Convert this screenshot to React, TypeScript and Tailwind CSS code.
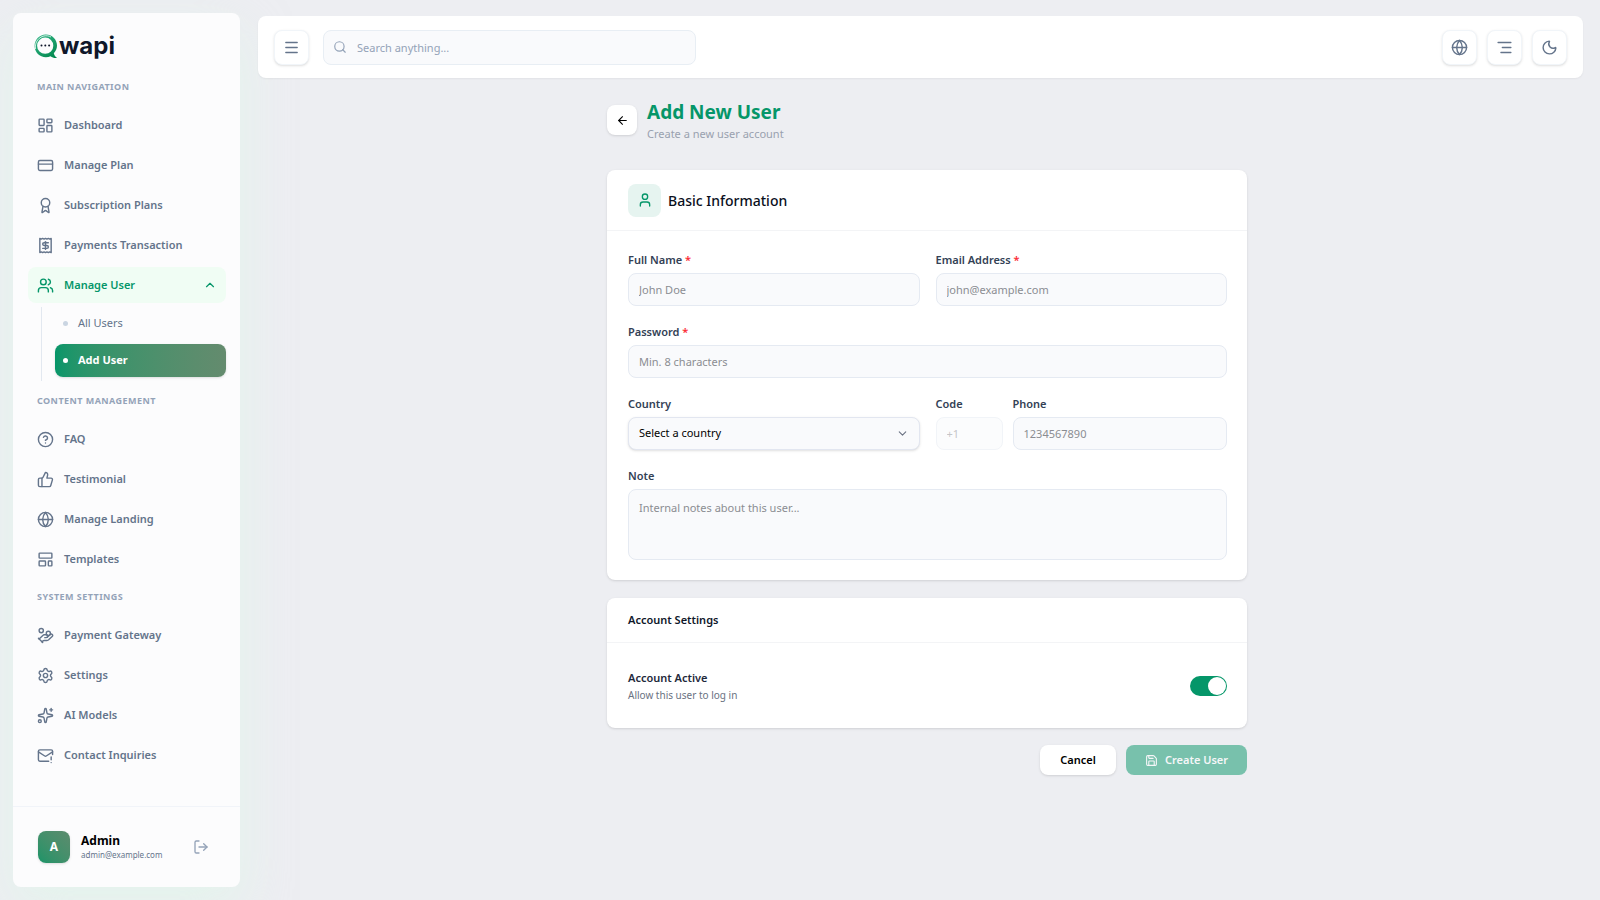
import { useState } from 'react';
import {
  AlignRight,
  ArrowLeft,
  Award,
  ChevronDown,
  ChevronUp,
  CircleHelp,
  CreditCard,
  Globe,
  HandCoins,
  LayoutDashboard,
  LayoutTemplate,
  LogOut,
  MailWarning,
  Menu,
  Moon,
  Receipt,
  Save,
  Search,
  Settings,
  Sparkles,
  ThumbsUp,
  User,
  Users,
  type LucideIcon,
} from 'lucide-react';

type NavItem = {
  label: string;
  icon: LucideIcon;
  children?: { label: string; active?: boolean }[];
};

const sections: { title: string; items: NavItem[] }[] = [
  {
    title: 'Main Navigation',
    items: [
      { label: 'Dashboard', icon: LayoutDashboard },
      { label: 'Manage Plan', icon: CreditCard },
      { label: 'Subscription Plans', icon: Award },
      { label: 'Payments Transaction', icon: Receipt },
      {
        label: 'Manage User',
        icon: Users,
        children: [{ label: 'All Users' }, { label: 'Add User', active: true }],
      },
    ],
  },
  {
    title: 'Content Management',
    items: [
      { label: 'FAQ', icon: CircleHelp },
      { label: 'Testimonial', icon: ThumbsUp },
      { label: 'Manage Landing', icon: Globe },
      { label: 'Templates', icon: LayoutTemplate },
    ],
  },
  {
    title: 'System Settings',
    items: [
      { label: 'Payment Gateway', icon: HandCoins },
      { label: 'Settings', icon: Settings },
      { label: 'AI Models', icon: Sparkles },
      { label: 'Contact Inquiries', icon: MailWarning },
    ],
  },
];

const inputClass =
  'block w-full h-[33px] rounded-lg border border-[#e5eaf2] bg-[#f9fafc] px-2.5 text-[11px] text-gray-900 placeholder:text-[#8b8d92] outline-none focus:border-[#059669]';

const Logo = () => (
  <a href="#" className="flex items-center gap-px pl-[21px]" aria-label="wapi">
    <svg width="24" height="25" viewBox="0 0 24 25" fill="none">
      <defs>
        <linearGradient id="bubble" x1="4" y1="2" x2="20" y2="24" gradientUnits="userSpaceOnUse">
          <stop stopColor="#2fb383" />
          <stop offset="1" stopColor="#03884f" />
        </linearGradient>
      </defs>
      <path
        fill="url(#bubble)"
        fillRule="evenodd"
        d="M11.8.6C18 .6 23 5.500 23 11.600c0 3.200-1.200 5.700-3.200 7.700.5 2.100 1.600 3.600 3.300 4.700-2.800.3-4.900-.4-6.500-1.700-1.500.6-3 .9-4.700.9C5.600 23.200.6 18.200.6 12 .6 5.700 5.600.6 11.800.6ZM11.200 3.600a8.100 8.100 0 1 0 0 16.200 8.100 8.100 0 0 0 0-16.200Z"
      />
      <path d="M1.600 15C.6 9.500 3.400 4.200 9 2.200c3-.9 6-.4 8 .8" stroke="#fcfdfd" strokeWidth=".8" />
      <circle cx="7.500" cy="11.500" r="1" fill="#0f172a" />
      <circle cx="11.300" cy="11.500" r="1" fill="#0f172a" />
      <circle cx="15.100" cy="11.500" r="1" fill="#0f172a" />
    </svg>
    <span className="font-['Inter',sans-serif] text-[24px] leading-[26px] font-bold text-[#0f172a]">wapi</span>
  </a>
);

const NavLink = ({ item }: { item: NavItem }) => {
  const Icon = item.icon;

  if (!item.children) {
    return (
      <a href="#" className="flex h-9 items-center gap-2.5 rounded-lg px-[9px] text-[11px] font-semibold text-[#64748b]">
        <Icon size={17} />
        {item.label}
      </a>
    );
  }

  return (
    <div>
      <button
        type="button"
        aria-expanded="true"
        className="flex h-9 w-full items-center gap-2.5 rounded-lg bg-[#f0fdf4] px-[9px] text-[11px] font-semibold text-[#059669]"
      >
        <Icon size={17} />
        {item.label}
        <ChevronUp size={14} className="ml-auto" />
      </button>
      <div className="mt-1 ml-[13px] flex flex-col gap-1 border-l border-[#e2e8f0] pb-1 pl-[13px]">
        {item.children.map((child) => (
          <a
            key={child.label}
            href="#"
            className={
              child.active
                ? 'flex h-[33px] items-center gap-2.5 rounded-lg bg-linear-to-r from-[#059669] to-[#648b6e] px-2 text-[11px] font-bold text-white shadow-sm'
                : 'flex h-[33px] items-center gap-2.5 rounded-lg px-2 text-[11px] text-[#64748b]'
            }
          >
            <span className={child.active ? 'size-[5px] rounded-full bg-white' : 'size-[5px] rounded-full bg-slate-300'} />
            {child.label}
          </a>
        ))}
      </div>
    </div>
  );
};

const Sidebar = () => (
  <aside className="flex w-[227px] shrink-0 flex-col rounded-lg bg-[#fcfcfd] pt-5 shadow-[0_20px_50px_rgba(220,252,231,0.5)]">
    <Logo />
    <nav className="flex flex-col gap-3 pt-5 pr-[14px] pl-[15px]">
      {sections.map((section) => (
        <div key={section.title}>
          <h2 className="mb-3 px-[9px] text-[9px] leading-4 font-bold tracking-wider text-[#94a3b8] uppercase">
            {section.title}
          </h2>
          <div className="flex flex-col gap-1">
            {section.items.map((item) => (
              <NavLink key={item.label} item={item} />
            ))}
          </div>
        </div>
      ))}
    </nav>
    <div className="mt-auto flex items-center border-t border-[#f1f4f9] px-[25px] py-6">
      <div className="flex size-8 items-center justify-center rounded-lg bg-linear-to-tr from-[#159468] to-[#5c8b6e] text-[12px] font-bold text-white shadow-sm">
        A
      </div>
      <div className="ml-[11px]">
        <p className="text-[12px] leading-4 font-bold text-black">Admin</p>
        <p className="text-[8px] leading-3 text-[#64748b]">admin@example.com</p>
      </div>
      <button type="button" aria-label="Log out" className="mr-1.5 ml-auto text-[#94a3b8]">
        <LogOut size={16} />
      </button>
    </div>
  </aside>
);

const headerButton =
  'flex size-[35px] shrink-0 items-center justify-center rounded-lg border border-[#f1f5f9] bg-white text-[#64748b] shadow-sm';

const Header = () => (
  <header className="mr-[17px] ml-1 flex h-[62px] items-center rounded-lg bg-white px-4 shadow-xs">
    <button type="button" aria-label="Toggle sidebar" className={headerButton}>
      <Menu size={17} />
    </button>
    <div className="relative ml-[14px] w-[373px]">
      <Search size={14} className="absolute top-[10px] left-2.5 text-[#94a3b8]" />
      <input
        type="search"
        aria-label="Search"
        placeholder="Search anything..."
        className="block h-[35px] w-full rounded-lg border border-[#e8eef4] bg-[#f9fafc] pr-3 pl-[33px] text-[11px] outline-none placeholder:text-[#94a3b8]"
      />
    </div>
    <div className="ml-auto flex gap-2.5">
      <button type="button" aria-label="Language" className={headerButton}>
        <Globe size={17} />
      </button>
      <button type="button" aria-label="Text direction" className={headerButton}>
        <AlignRight size={17} />
      </button>
      <button type="button" aria-label="Dark mode" className={headerButton}>
        <Moon size={17} />
      </button>
    </div>
  </header>
);

type FieldProps = {
  id: string;
  label: string;
  required?: boolean;
  className?: string;
  children: React.ReactNode;
};

const Field = ({ id, label, required, className, children }: FieldProps) => (
  <div className={className}>
    <label htmlFor={id} className="mb-1 block text-[11px] leading-[18px] font-semibold text-[#334155]">
      {label}
      {required && <span className="text-red-500"> *</span>}
    </label>
    {children}
  </div>
);

const UserForm = () => {
  const [active, setActive] = useState(true);

  return (
    <form className="mx-auto w-full max-w-[640px]" onSubmit={(e) => e.preventDefault()}>
      <div className="flex items-center gap-2.5">
        <button
          type="button"
          aria-label="Back"
          className="flex size-[30px] items-center justify-center rounded-lg bg-white text-black shadow-sm"
        >
          <ArrowLeft size={13} />
        </button>
        <div className="pt-1">
          <h1 className="text-[19px] leading-6 font-bold text-[#059669]">Add New User</h1>
          <p className="text-[11px] leading-5 text-[#99a1af]">Create a new user account</p>
        </div>
      </div>

      {/* Basic information */}
      <section className="mt-[26px] rounded-lg bg-white shadow-sm">
        <div className="flex h-[61px] items-center gap-[7px] border-b border-gray-100 px-[21px]">
          <span className="flex size-[33px] items-center justify-center rounded-lg bg-[#e6f4f0] text-[#059669]">
            <User size={16} />
          </span>
          <h2 className="text-[14px] font-medium text-[#0a0f1c]">Basic Information</h2>
        </div>
        <div className="grid grid-cols-2 gap-x-4 gap-y-[17px] py-5 pr-5 pl-[21px]">
          <Field id="name" label="Full Name" required>
            <input id="name" type="text" placeholder="John Doe" className={inputClass} />
          </Field>
          <Field id="email" label="Email Address" required>
            <input id="email" type="email" placeholder="john@example.com" className={inputClass} />
          </Field>
          <Field id="password" label="Password" required className="col-span-2">
            <input id="password" type="password" placeholder="Min. 8 characters" className={inputClass} />
          </Field>
          <Field id="country" label="Country">
            <div className="relative">
              <select
                id="country"
                className="block h-[33px] w-full appearance-none rounded-lg border border-[#e2e6f0] bg-[#f9fafc] px-2.5 text-[11px] text-black shadow-sm outline-none"
              >
                <option>Select a country</option>
              </select>
              <ChevronDown size={13} className="pointer-events-none absolute top-2.5 right-[11px] text-gray-500" />
            </div>
          </Field>
          <div className="flex gap-2.5">
            <Field id="code" label="Code" className="w-[67px] shrink-0">
              <input id="code" type="text" placeholder="+1" disabled className={`${inputClass} opacity-50`} />
            </Field>
            <Field id="phone" label="Phone" className="flex-1">
              <input id="phone" type="tel" placeholder="1234567890" className={inputClass} />
            </Field>
          </div>
          <Field id="note" label="Note" className="col-span-2">
            <textarea
              id="note"
              placeholder="Internal notes about this user..."
              className="block h-[71px] w-full resize-none rounded-lg border border-[#e5eaf2] bg-[#f9fafc] px-2.5 py-[9px] text-[11px] leading-[18px] outline-none placeholder:text-[#8b8d92]"
            />
          </Field>
        </div>
      </section>

      {/* Account settings */}
      <section className="mt-[18px] rounded-lg bg-white shadow-sm">
        <h2 className="border-b border-gray-100 px-[21px] py-3 text-[11px] leading-5 font-semibold text-[#0f172a]">
          Account Settings
        </h2>
        <div className="flex items-center justify-between pt-[26px] pr-5 pb-[25px] pl-[21px]">
          <div>
            <label htmlFor="active" className="block text-[11px] leading-[18px] font-semibold text-[#1e293b]">
              Account Active
            </label>
            <p className="text-[10px] leading-4 text-gray-500">Allow this user to log in</p>
          </div>
          <input
            id="active"
            type="checkbox"
            role="switch"
            checked={active}
            onChange={(e) => setActive(e.target.checked)}
            className="flex h-5 w-[37px] appearance-none items-center rounded-full bg-gray-300 px-px before:size-[18px] before:rounded-full before:bg-white checked:justify-end checked:bg-[#059669]"
          />
        </div>
      </section>

      <div className="mt-[17px] flex justify-end gap-2.5">
        <button type="button" className="h-[30px] w-[76px] rounded-lg bg-white text-[11px] font-semibold text-black shadow-sm">
          Cancel
        </button>
        <button
          type="submit"
          disabled
          className="flex h-[30px] w-[121px] items-center justify-center gap-[7px] rounded-lg bg-[#059669] text-[11px] font-semibold text-white opacity-50"
        >
          <Save size={13} />
          Create User
        </button>
      </div>
    </form>
  );
};

const App = () => (
  <div className="flex min-h-screen bg-[#edeef2] py-[13px] pl-[13px] font-['Noto_Sans','Open_Sans',sans-serif]">
    <Sidebar />
    <main className="min-w-0 flex-1 pt-[3px] pl-[14px]">
      <Header />
      <div className="pt-[18px]">
        <UserForm />
      </div>
    </main>
  </div>
);

export default App;
